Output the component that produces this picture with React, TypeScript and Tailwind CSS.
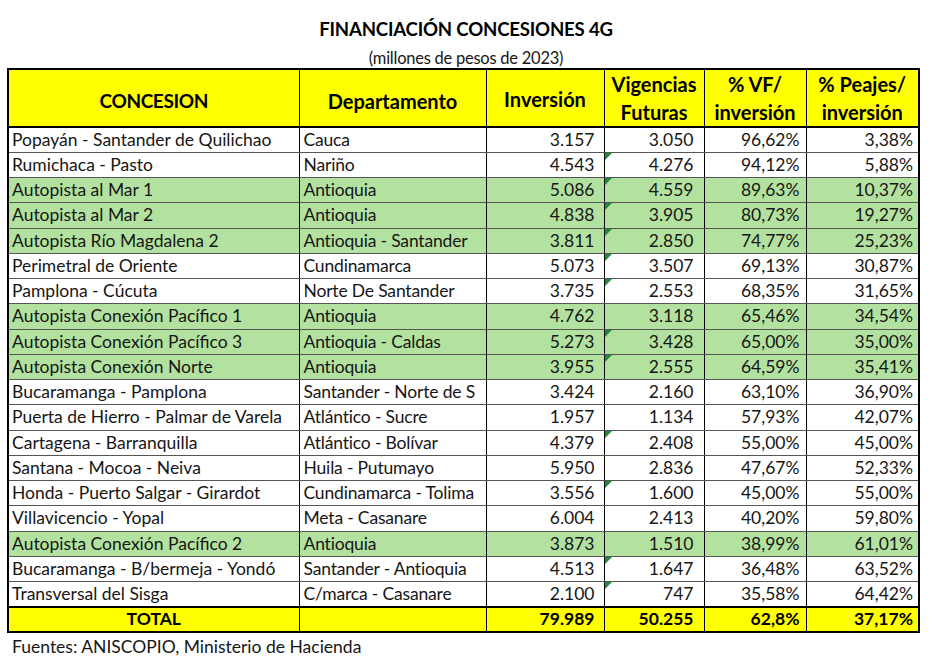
const rows = [
  { c: "Popayán - Santander de Quilichao", d: "Cauca", inv: "3.157", vf: "3.050", pvf: "96,62%", pp: "3,38%", green: false, mark: false },
  { c: "Rumichaca - Pasto", d: "Nariño", inv: "4.543", vf: "4.276", pvf: "94,12%", pp: "5,88%", green: false, mark: true },
  { c: "Autopista al Mar 1", d: "Antioquia", inv: "5.086", vf: "4.559", pvf: "89,63%", pp: "10,37%", green: true, mark: true },
  { c: "Autopista al Mar 2", d: "Antioquia", inv: "4.838", vf: "3.905", pvf: "80,73%", pp: "19,27%", green: true, mark: true },
  { c: "Autopista Río Magdalena 2", d: "Antioquia - Santander", inv: "3.811", vf: "2.850", pvf: "74,77%", pp: "25,23%", green: true, mark: true },
  { c: "Perimetral de Oriente", d: "Cundinamarca", inv: "5.073", vf: "3.507", pvf: "69,13%", pp: "30,87%", green: false, mark: true },
  { c: "Pamplona - Cúcuta", d: "Norte De Santander", inv: "3.735", vf: "2.553", pvf: "68,35%", pp: "31,65%", green: false, mark: true },
  { c: "Autopista Conexión Pacífico 1", d: "Antioquia", inv: "4.762", vf: "3.118", pvf: "65,46%", pp: "34,54%", green: true, mark: false },
  { c: "Autopista Conexión Pacífico 3", d: "Antioquia - Caldas", inv: "5.273", vf: "3.428", pvf: "65,00%", pp: "35,00%", green: true, mark: true },
  { c: "Autopista Conexión Norte", d: "Antioquia", inv: "3.955", vf: "2.555", pvf: "64,59%", pp: "35,41%", green: true, mark: true },
  { c: "Bucaramanga - Pamplona", d: "Santander - Norte de S", inv: "3.424", vf: "2.160", pvf: "63,10%", pp: "36,90%", green: false, mark: false },
  { c: "Puerta de Hierro - Palmar de Varela", d: "Atlántico - Sucre", inv: "1.957", vf: "1.134", pvf: "57,93%", pp: "42,07%", green: false, mark: false },
  { c: "Cartagena - Barranquilla", d: "Atlántico - Bolívar", inv: "4.379", vf: "2.408", pvf: "55,00%", pp: "45,00%", green: false, mark: true },
  { c: "Santana - Mocoa - Neiva", d: "Huila - Putumayo", inv: "5.950", vf: "2.836", pvf: "47,67%", pp: "52,33%", green: false, mark: false },
  { c: "Honda - Puerto Salgar - Girardot", d: "Cundinamarca - Tolima", inv: "3.556", vf: "1.600", pvf: "45,00%", pp: "55,00%", green: false, mark: true },
  { c: "Villavicencio - Yopal", d: "Meta - Casanare", inv: "6.004", vf: "2.413", pvf: "40,20%", pp: "59,80%", green: false, mark: false },
  { c: "Autopista Conexión Pacífico 2", d: "Antioquia", inv: "3.873", vf: "1.510", pvf: "38,99%", pp: "61,01%", green: true, mark: false },
  { c: "Bucaramanga - B/bermeja - Yondó", d: "Santander - Antioquia", inv: "4.513", vf: "1.647", pvf: "36,48%", pp: "63,52%", green: false, mark: true },
  { c: "Transversal del Sisga", d: "C/marca - Casanare", inv: "2.100", vf: "747", pvf: "35,58%", pp: "64,42%", green: false, mark: true },
];

const cell = "border-r border-b border-r-black border-b-[#555] whitespace-nowrap overflow-hidden p-0";

const App = () => {
  return (
    <div className="w-[932px] h-[668px] bg-white text-[#161616] font-['Lato',sans-serif]">
      {/* Title */}
      <h1 className="pt-[17px] text-center text-[18.6px] font-bold leading-[24px] tracking-[-0.01em] text-black">
        FINANCIACIÓN CONCESIONES 4G
      </h1>
      <p className="mt-[8px] text-center text-[16.5px] leading-[18px] tracking-[-0.015em]">
        (millones de pesos de 2023)
      </p>

      {/* Table */}
      <table className="ml-[7px] mt-[1px] w-[911px] table-fixed border-collapse border-2 border-black text-[17.5px] leading-[22px]">
        <colgroup>
          <col className="w-[291px]" />
          <col className="w-[187px]" />
          <col className="w-[118px]" />
          <col className="w-[100px]" />
          <col className="w-[102px]" />
          <col className="w-[113px]" />
        </colgroup>
        <thead>
          <tr className="h-[57px] bg-[#ffff00] border-b-2 border-black text-[20px] leading-[28px] font-bold text-black">
            <th className="border-r border-black pt-[6px] text-[19px] tracking-[-0.02em]">CONCESION</th>
            <th className="border-r border-black pt-[6px]">Departamento</th>
            <th className="border-r border-black pt-[2px]">Inversión</th>
            <th className="border-r border-black">
              Vigencias
              <br />
              Futuras
            </th>
            <th className="border-r border-black">
              % VF/
              <br />
              inversión
            </th>
            <th className="border-r border-black">
              % Peajes/
              <br />
              inversión
            </th>
          </tr>
        </thead>
        <tbody>
          {rows.map((r) => (
            <tr key={r.c} className={`h-[25.25px] ${r.green ? "bg-[#b3e2a0]" : "bg-white"}`}>
              <td className={`${cell} pl-[3px] text-left`}>{r.c}</td>
              <td className={`${cell} pl-[4px] text-left tracking-[-0.01em]`}>{r.d}</td>
              <td className={`${cell} pr-[9px] text-right`}>{r.inv}</td>
              <td className={`${cell} relative pr-[10px] text-right`}>
                {r.mark && (
                  <span className="absolute left-0 top-0 h-0 w-0 border-t-[7px] border-r-[7px] border-t-[#1f8a3c] border-r-transparent" />
                )}
                {r.vf}
              </td>
              <td className={`${cell} pr-[6px] text-right`}>{r.pvf}</td>
              <td className={`${cell} pr-[5px] text-right`}>{r.pp}</td>
            </tr>
          ))}
          <tr className="h-[25px] bg-[#ffff00] border-t-2 border-black font-bold text-black">
            <td className="border-r border-black text-center">TOTAL</td>
            <td className="border-r border-black"></td>
            <td className="border-r border-black pr-[9px] text-right">79.989</td>
            <td className="border-r border-black pr-[10px] text-right">50.255</td>
            <td className="border-r border-black pr-[6px] text-right">62,8%</td>
            <td className="border-r border-black pr-[5px] text-right">37,17%</td>
          </tr>
        </tbody>
      </table>

      {/* Footer */}
      <p className="mt-[3px] pl-[12px] text-[17.5px] leading-[22px]">
        Fuentes: ANISCOPIO, Ministerio de Hacienda
      </p>
    </div>
  );
};

export default App;
